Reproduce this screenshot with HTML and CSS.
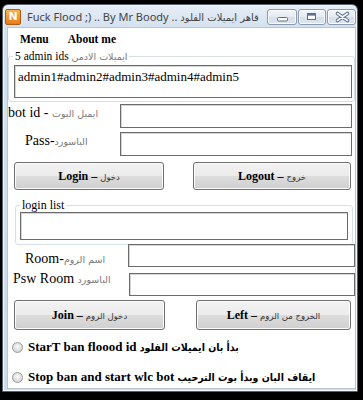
FILE: index.html
```html
<!DOCTYPE html>
<html lang="en">
<head>
    <meta charset="UTF-8">
    <title>Fuck Flood ;) .. By Mr Boody</title>
    <link rel="stylesheet" href="styles.css">
</head>
<body>
    <div class="window">
        <div class="titlebar">
            <span class="app-icon">N</span>
            <span class="title">Fuck Flood ;) .. By Mr Boody .. <span class="ar">قاهر ايميلات الفلود</span></span>
            <div class="caption-btns">
                <span class="cap-btn cap-min">
                    <svg width="28" height="14" viewBox="0 0 28 14"><rect x="9.5" y="7.5" width="10" height="3.5" rx="1" fill="#fff" stroke="#5d6f86"/></svg>
                </span>
                <span class="cap-btn cap-max">
                    <svg width="26" height="14" viewBox="0 0 26 14"><rect x="8.5" y="3.5" width="8" height="6" fill="#fff" stroke="#5d6f86"/><rect x="9" y="4" width="7" height="1.6" fill="#5d6f86"/></svg>
                </span>
                <span class="cap-btn cap-close">
                    <svg width="27" height="14" viewBox="0 0 27 14">
                        <path d="M9.5 3.5 L19.5 10.5 M19.5 3.5 L9.5 10.5" stroke="#5d6f86" stroke-width="3.6" stroke-linecap="round"/>
                        <path d="M9.5 3.5 L19.5 10.5 M19.5 3.5 L9.5 10.5" stroke="#f6f8fb" stroke-width="1.6" stroke-linecap="round"/>
                    </svg>
                </span>
            </div>
        </div>

        <div class="client">
            <div class="menubar">
                <span>Menu</span>
                <span>About me</span>
            </div>

            <fieldset class="group group-admins">
                <legend>5 admin ids <span class="ar">ايميلات الادمن</span></legend>
                <div class="textbox box-admins">admin1#admin2#admin3#admin4#admin5</div>
            </fieldset>

            <div class="field-row row-bot">
                <label class="lbl lbl-bot">bot id - <span class="ar">ايميل البوت</span></label>
                <div class="textbox box-bot"></div>
            </div>
            <div class="field-row row-pass">
                <label class="lbl lbl-pass">Pass-<span class="ar">الباسورد</span></label>
                <div class="textbox box-bot"></div>
            </div>

            <div class="btn-row row-login">
                <button class="btn btn-login">Login – <span class="ar">دخول</span></button>
                <button class="btn btn-logout">Logout – <span class="ar">خروج</span></button>
            </div>

            <fieldset class="group group-list">
                <legend>login list</legend>
                <div class="textbox box-list"></div>
            </fieldset>

            <div class="field-row row-room">
                <label class="lbl lbl-room">Room-<span class="ar">اسم الروم</span></label>
                <div class="textbox box-room"></div>
            </div>
            <div class="field-row row-psw">
                <label class="lbl lbl-psw">Psw Room <span class="ar">الباسورد</span></label>
                <div class="textbox box-psw"></div>
            </div>

            <div class="btn-row row-join">
                <button class="btn btn-join">Join – <span class="ar">دخول الروم</span></button>
                <button class="btn btn-left">Left – <span class="ar">الخروج من الروم</span></button>
            </div>

            <div class="radio-row radio-first">
                <span class="radio"></span>
                <span class="radio-text">StarT ban floood id <span class="ar">بدأ بان ايميلات الفلود</span></span>
            </div>
            <div class="radio-row radio-second">
                <span class="radio"></span>
                <span class="radio-text">Stop ban and start wlc bot <span class="ar">ايقاف البان وبدأ بوت الترحيب</span></span>
            </div>
        </div>
    </div>
</body>
</html>
```

FILE: styles.css
```css
body {
    margin: 0;
    background-color: #000;
    width: 363px;
    height: 400px;
    overflow: hidden;
    font-family: "Liberation Serif", serif;
    color: #000;
}
.ar {
    font-family: "DejaVu Sans", sans-serif;
}

/* window frame */
.window {
    margin: 4px 0 0 2px;
    width: 356px;
    box-sizing: border-box;
    border: 1px solid #56606d;
    border-radius: 6px 6px 0 0;
    background: linear-gradient(#e6eef7, #d3e0ee 24px, #cddbea);
    box-shadow: inset 0 0 0 1px #f4f8fc;
}
.titlebar {
    height: 23px;
    display: flex;
    align-items: center;
}
.app-icon {
    margin-left: 2px;
    width: 14px;
    height: 14px;
    border: 1px solid #b05a12;
    border-radius: 2px;
    background: linear-gradient(#fbb24c, #ea7a14);
    color: #fff;
    font: bold 11px "DejaVu Sans", sans-serif;
    line-height: 14px;
    text-align: center;
}
.title {
    margin-left: 6px;
    font-family: "Noto Sans", sans-serif;
    font-size: 11px;
    color: #444;
    white-space: nowrap;
}
.title .ar {
    font-size: 10px;
}
.caption-btns {
    margin-left: auto;
    margin-right: 1px;
    align-self: flex-start;
    margin-top: 4px;
    display: flex;
    gap: 1px;
}
.cap-btn {
    display: block;
    height: 14px;
    border: 1px solid #8a9bb1;
    border-radius: 3px;
    background: linear-gradient(#f3f6fa, #e3eaf2 50%, #d6e0eb 51%, #dbe4ee);
    box-shadow: inset 0 0 0 1px #fbfcfe;
}
.cap-btn svg {
    display: block;
}
.cap-min { width: 28px; }
.cap-max { width: 26px; }
.cap-close { width: 27px; }

/* client area */
.client {
    margin: 0 2px 3px 5px;
    height: 360px;
    background-color: #fff;
    box-shadow: 0 0 0 1px #b7c6d7;
}
.menubar {
    height: 21px;
    display: flex;
    align-items: center;
    gap: 19px;
    padding-left: 12px;
    font-weight: bold;
    font-size: 11.5px;
}

/* group boxes */
.group {
    margin: 0;
    min-width: 0;
    box-sizing: border-box;
    border: 1px solid #d5dfe5;
    border-radius: 3px;
}
.group legend {
    padding: 0 2px;
}
.group-admins {
    margin-top: 1px;
    width: 347px;
    padding: 2px 2px 3px 5px;
}
.group-admins legend {
    margin-left: -1px;
    font-size: 11.5px;
    line-height: 12px;
}
.group-admins legend .ar {
    font-size: 9.5px;
    color: #777;
}
.group-list {
    margin: 8px 0 0 7px;
    width: 338px;
    padding: 0 4px 4px 4px;
}
.group-list legend {
    font-size: 12px;
    line-height: 14px;
}

/* text boxes */
.textbox {
    box-sizing: border-box;
    border: 1px solid #6b6b6b;
    box-shadow: inset 1px 1px 0 #d6d6d6;
    background-color: #fff;
}
.box-admins {
    width: 338px;
    height: 33px;
    padding: 3px 3px;
    font-size: 13px;
    line-height: 15px;
}
.box-bot {
    width: 232px;
    height: 24px;
}
.box-list {
    width: 328px;
    height: 28px;
}
.box-room {
    width: 229px;
    height: 23px;
}
.box-psw {
    width: 226px;
    height: 23px;
}

/* label + box rows */
.field-row {
    display: flex;
    align-items: flex-start;
}
.lbl {
    box-sizing: border-box;
    font-size: 14px;
    line-height: 16px;
    white-space: nowrap;
}
.lbl .ar {
    font-size: 9.5px;
    color: #777;
}
.row-bot { margin-top: 2px; }
.row-pass { margin-top: 4px; }
.row-bot .lbl,
.row-pass .lbl {
    width: 112px;
}
.lbl-bot { padding-top: 1px; }
.lbl-pass { padding: 1px 0 0 17px; }
.row-room { margin-top: -1px; }
.row-psw { margin-top: 5px; }
.row-room .lbl,
.row-psw .lbl {
    width: 121px;
}
.lbl-room { padding: 7px 0 0 17px; }
.lbl-psw { padding: 0 0 0 5px; margin-top: -2px; }

/* buttons */
.btn-row {
    display: flex;
}
.btn {
    box-sizing: border-box;
    padding: 0;
    border: 1px solid #707070;
    border-radius: 3px;
    background: linear-gradient(#f2f2f2, #ebebeb 50%, #dddddd 51%, #cfcfcf);
    box-shadow: inset 0 0 0 1px #fbfbfb;
    font-family: "Liberation Serif", serif;
    font-weight: bold;
    font-size: 12px;
    color: #000;
}
.btn .ar {
    font-size: 8.5px;
    font-weight: normal;
    color: #333;
}
.row-login { margin-top: 6px; }
.btn-login { margin-left: 6px; width: 150px; height: 28px; }
.btn-logout { margin-left: 29px; width: 158px; height: 28px; }
.row-join { margin-top: 4px; }
.btn-join { margin-left: 6px; width: 151px; height: 30px; }
.btn-left { margin-left: 31px; width: 155px; height: 30px; }

/* radio options */
.radio-row {
    height: 20px;
    display: flex;
    align-items: center;
    gap: 5px;
    padding-left: 4px;
}
.radio-first { margin-top: 7px; }
.radio-second { margin-top: 10px; }
.radio {
    width: 11px;
    height: 11px;
    box-sizing: border-box;
    border: 1px solid #9a9a9a;
    border-radius: 50%;
    background: radial-gradient(circle at 50% 40%, #fafafa 0, #e4e4e4 45%, #c8c8c8 100%);
}
.radio-text {
    font-weight: bold;
    font-size: 13px;
    white-space: nowrap;
}
.radio-text .ar {
    font-family: "DejaVu Sans Condensed", "DejaVu Sans", sans-serif;
    font-size: 10.5px;
}
```
